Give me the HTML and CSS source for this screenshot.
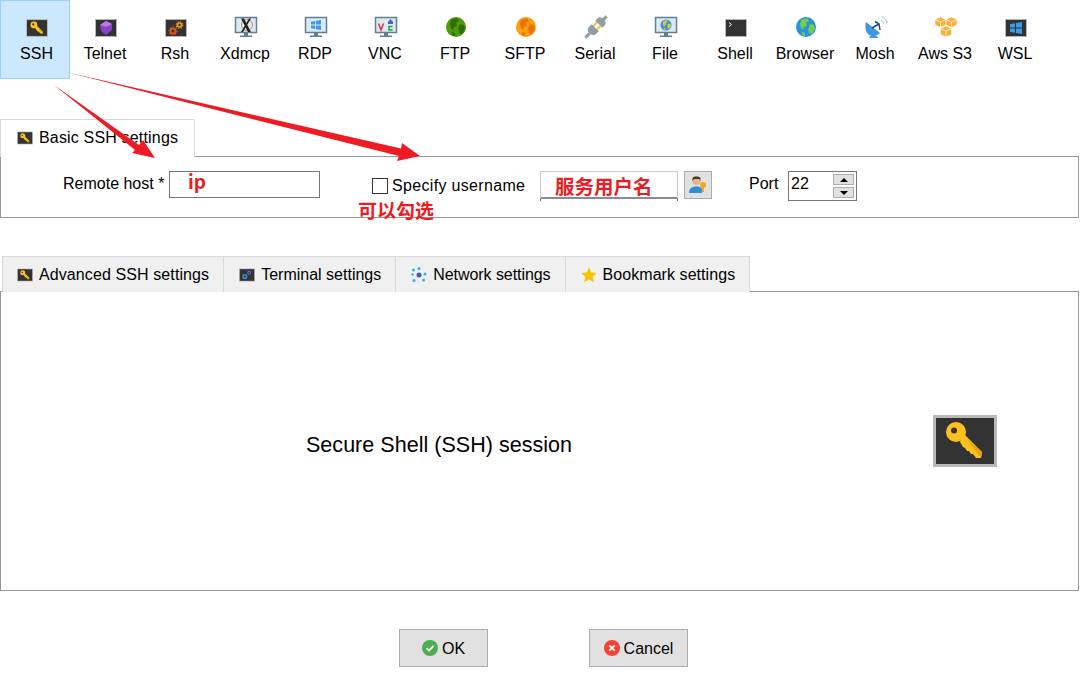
FILE: index.html
```html
<!DOCTYPE html>
<html lang="en">
<head>
    <meta charset="utf-8">
    <title>Session settings</title>
    <link rel="stylesheet" href="styles.css">
</head>
<body>
    <svg class="defs" width="0" height="0" aria-hidden="true">
        <defs>
            <symbol id="dark-box" viewBox="0 0 22 18">
                <rect x=".5" y=".5" width="21" height="17" fill="#333" stroke="#b5b5b5"/>
            </symbol>
            <symbol id="key-box" viewBox="0 0 64 52">
                <rect x="1.500" y="1.500" width="61" height="49" fill="#333" stroke="#b9b9b9" stroke-width="3"/>
                <circle cx="23" cy="17" r="10" fill="#fdc01f"/>
                <path d="M30 18 49 37 48 43 43 43 40 39 38 39 36 36 34 36 32 33 30 32 27 27z" fill="#fdc01f"/>
                <path d="M33 23 49 37 48 43z" fill="#e8a410"/>
                <circle cx="21" cy="15.500" r="3" fill="#333"/>
            </symbol>
            <symbol id="monitor" viewBox="0 0 24 24">
                <rect x="1.500" y="2.500" width="21" height="15" fill="#dbeaf2" stroke="#62808f" stroke-width="1.500"/>
                <rect x="10" y="18" width="4" height="3" fill="#62808f"/>
                <rect x="6" y="20.500" width="12" height="1.500" fill="#62808f"/>
            </symbol>
            <symbol id="win-logo" viewBox="0 0 12 12">
                <path d="M0 2 5 1.200V5.500H0zM6 1 12 0V5.500H6zM0 6.500H5V10.800L0 10zM6 6.500H12V12L6 11z" fill="#3d9ae8"/>
            </symbol>
            <symbol id="land" viewBox="0 0 20 20">
                <path d="M5 3 11 1l2 3-3 2 1 3-3 1-1 3-2-2-1-4zM14 7l4 1 1 4-3 5-3-1-1-4zM6 15l3 1 0 3-3-1z"/>
            </symbol>
        </defs>
    </svg>

    <nav class="toolbar">
        <a class="tool selected">
            <svg class="tool-icon" viewBox="0 0 24 24">
                <use href="#key-box" x="1" y="4" width="22" height="18"/>
            </svg>
            <span>SSH</span>
        </a>
        <a class="tool">
            <svg class="tool-icon" viewBox="0 0 24 24">
                <use href="#dark-box" x="1" y="4" width="22" height="18"/>
                <path d="M12 6 18 9 18 15 12 20 7 16 6 10z" fill="#8e3fc8"/>
                <path d="M6 10 12 12 18 9 12 6z" fill="#b77ee8"/>
            </svg>
            <span>Telnet</span>
        </a>
        <a class="tool">
            <svg class="tool-icon" viewBox="0 0 24 24">
                <use href="#dark-box" x="1" y="4" width="22" height="18"/>
                <circle cx="9" cy="16" r="2.500" fill="none" stroke="#d9541e" stroke-width="2"/>
                <circle cx="9" cy="16" r="4" fill="none" stroke="#d9541e" stroke-width="1.200" stroke-dasharray="1.500 1.500"/>
                <circle cx="15.500" cy="10" r="2" fill="none" stroke="#f29a1f" stroke-width="1.600"/>
                <circle cx="15.500" cy="10" r="3.300" fill="none" stroke="#f29a1f" stroke-width="1.100" stroke-dasharray="1.300 1.300"/>
            </svg>
            <span>Rsh</span>
        </a>
        <a class="tool">
            <svg class="tool-icon" viewBox="0 0 24 24">
                <use href="#monitor" width="24" height="24"/>
                <circle cx="13" cy="10" r="5.500" fill="none" stroke="#e08a66"/>
                <path d="M7 3.500h3l7 13.500h-3zM15 3.500h2L9 17H7z" fill="#222"/>
            </svg>
            <span>Xdmcp</span>
        </a>
        <a class="tool">
            <svg class="tool-icon" viewBox="0 0 24 24">
                <use href="#monitor" width="24" height="24"/>
                <use href="#win-logo" x="7" y="5" width="10" height="10"/>
            </svg>
            <span>RDP</span>
        </a>
        <a class="tool">
            <svg class="tool-icon" viewBox="0 0 24 24">
                <use href="#monitor" width="24" height="24"/>
                <path d="M4.500 8.500 7 15l2.500-6.500" fill="none" stroke="#e0303a" stroke-width="1.500"/>
                <path d="M18.500 11.500h-3.500v3.500h3.500" fill="none" stroke="#1fa03c" stroke-width="1.500"/>
                <path d="M14 7 16.500 4 19 7v2h-5z" fill="#4a5be0"/>
            </svg>
            <span>VNC</span>
        </a>
        <a class="tool">
            <svg class="tool-icon" viewBox="0 0 24 24">
                <circle cx="12" cy="12" r="10" fill="#4f9a08"/>
                <use href="#land" class="land-dark-green" x="2" y="2" width="20" height="20"/>
            </svg>
            <span>FTP</span>
        </a>
        <a class="tool">
            <svg class="tool-icon" viewBox="0 0 24 24">
                <circle cx="12" cy="12" r="10" fill="#ff9d0a"/>
                <use href="#land" class="land-orange" x="2" y="2" width="20" height="20"/>
            </svg>
            <span>SFTP</span>
        </a>
        <a class="tool">
            <svg class="tool-icon" viewBox="0 0 24 24">
                <g transform="rotate(45 12 12)" fill="#8f9ea8">
                    <rect x="10.500" y="-3" width="3" height="5"/>
                    <path d="M7 5Q7 1 12 1T17 5V8H7z"/>
                    <rect x="8.500" y="8" width="2" height="5" fill="#f4c430"/>
                    <rect x="13.500" y="8" width="2" height="5" fill="#f4c430"/>
                    <path d="M7 13H17V17Q17 21 12 21T7 17z"/>
                    <rect x="10.500" y="21" width="3" height="6"/>
                </g>
            </svg>
            <span>Serial</span>
        </a>
        <a class="tool">
            <svg class="tool-icon" viewBox="0 0 24 24">
                <use href="#monitor" width="24" height="24"/>
                <circle cx="12" cy="10" r="5.500" fill="#3f8fd8"/>
                <use href="#land" class="land-yellow" x="6.500" y="4.500" width="11" height="11"/>
            </svg>
            <span>File</span>
        </a>
        <a class="tool">
            <svg class="tool-icon" viewBox="0 0 24 24">
                <use href="#dark-box" x="1" y="4" width="22" height="18"/>
                <path d="M5 7.500 7.500 9.500 5 11.500" fill="none" stroke="#eee"/>
            </svg>
            <span>Shell</span>
        </a>
        <a class="tool">
            <svg class="tool-icon" viewBox="0 0 24 24">
                <circle cx="12" cy="12" r="10" fill="#2f8fe0"/>
                <use href="#land" class="land-green" x="2" y="2" width="20" height="20"/>
            </svg>
            <span>Browser</span>
        </a>
        <a class="tool">
            <svg class="tool-icon" viewBox="0 0 24 24">
                <path d="M2 7 16 18C12 22 7 22 4 19 1 16 1 11 2 7z" fill="#3f97dd"/>
                <path d="M6 21h7l1 2H5z" fill="#3f97dd"/>
                <path d="M8 13 15 9M11 6.500l4 2.500 1 6" fill="none" stroke="#1c4f86" stroke-width="1.500"/>
                <path d="M17 5a4 4 0 0 1 2.500 3.500M17.500 1.500a8 8 0 0 1 5.500 7" fill="none" stroke="#8cc6ef"/>
            </svg>
            <span>Mosh</span>
        </a>
        <a class="tool">
            <svg class="tool-icon" viewBox="0 0 24 24">
                <path d="M6.500 2 12 4.500V10L6.500 12.500 1 10V4.500zM17.500 2 23 4.500V10L17.500 12.500 12 10V4.500zM12 11 17.500 13.500V19.500L12 22 6.500 19.500V13.500z" fill="#fbb03b" stroke="#fff" stroke-width=".5"/>
                <path d="M1 4.500 6.500 7 12 4.500 17.500 7 23 4.500M6.500 7V12.500M17.500 7V12.500M6.500 13.500 12 16 17.500 13.500M12 16V22" fill="none" stroke="#fff" stroke-width=".7"/>
            </svg>
            <span>Aws S3</span>
        </a>
        <a class="tool">
            <svg class="tool-icon" viewBox="0 0 24 24">
                <use href="#dark-box" x="1" y="4" width="22" height="18"/>
                <use href="#win-logo" x="6" y="7" width="12" height="12"/>
            </svg>
            <span>WSL</span>
        </a>
    </nav>

    <section class="basic">
        <div class="tabs">
            <div class="tab active">
                <svg class="tab-icon" viewBox="0 0 64 52"><use href="#key-box" width="64" height="52"/></svg>
                Basic SSH settings
            </div>
        </div>
        <form class="panel basic-form">
            <label class="host-label" for="host">Remote host *</label>
            <input class="host-input" id="host">
            <input class="check" id="specify" type="checkbox">
            <label class="user-label" for="specify">Specify username</label>
            <div class="user-field"><input class="user-input"></div>
            <button class="user-btn" type="button">
                <svg viewBox="0 0 20 20" width="20" height="20">
                    <circle cx="8.500" cy="6" r="4" fill="#e8b48c"/>
                    <path d="M4.500 6C4 2 6 1.500 8.500 1.500S13 2 12.500 5.500L11 4H6z" fill="#4a3526"/>
                    <path d="M1 18C1 13 4 11.500 8.500 11.500 11 11.500 13 12 14 14V18z" fill="#2f8fd8"/>
                    <circle cx="15" cy="10" r="3" fill="#f2a81d"/>
                    <path d="M14 11h2v6h-2z" fill="#f2a81d"/>
                </svg>
            </button>
            <label class="port-label" for="port">Port</label>
            <div class="port-field">
                <input class="port-input" id="port" value="22">
                <div class="spin">
                    <span class="spin-btn"><i class="arrow-up"></i></span>
                    <span class="spin-btn"><i class="arrow-down"></i></span>
                </div>
            </div>
        </form>
    </section>

    <section class="advanced">
        <div class="tabs">
            <div class="tab tab-advanced">
                <svg class="tab-icon" viewBox="0 0 64 52"><use href="#key-box" width="64" height="52"/></svg>
                Advanced SSH settings
            </div>
            <div class="tab">
                <svg class="tab-icon" viewBox="0 0 22 18">
                    <use href="#dark-box" width="22" height="18"/>
                    <circle cx="8" cy="11" r="2.500" fill="none" stroke="#3f8fd8" stroke-width="2"/>
                    <circle cx="14" cy="6" r="2" fill="none" stroke="#5d6fd8" stroke-width="1.500"/>
                </svg>
                Terminal settings
            </div>
            <div class="tab tab-network">
                <svg class="tab-icon square" viewBox="0 0 16 16">
                    <circle cx="8" cy="8" r="2.500" fill="#4a55c0"/>
                    <circle cx="2.500" cy="3" r="1.500" fill="#27b7d8"/>
                    <circle cx="8" cy="1.500" r="1.500" fill="#27b7d8"/>
                    <circle cx="14" cy="7" r="1.500" fill="#27b7d8"/>
                    <circle cx="12.500" cy="13" r="1.500" fill="#27b7d8"/>
                    <circle cx="3" cy="13.500" r="1.500" fill="#27b7d8"/>
                    <circle cx="1.500" cy="7.500" r="1.200" fill="#27b7d8"/>
                </svg>
                Network settings
            </div>
            <div class="tab tab-bookmark">
                <svg class="tab-icon square" viewBox="0 0 16 16">
                    <path d="M8 .5 10.300 5.500 15.800 6.100 11.700 9.800 12.900 15.300 8 12.500 3.100 15.300 4.300 9.800 .2 6.100 5.700 5.500z" fill="#f5c400"/>
                </svg>
                Bookmark settings
            </div>
        </div>
        <div class="panel description">
            <p>Secure Shell (SSH) session</p>
            <svg class="big-key" viewBox="0 0 64 52"><use href="#key-box" width="64" height="52"/></svg>
        </div>
    </section>

    <footer class="actions">
        <button class="action" type="button">
            <svg viewBox="0 0 16 16" width="16" height="16">
                <circle cx="8" cy="8" r="8" fill="#4caf50"/>
                <path d="M4.500 8.200 7 10.500 11.500 6" fill="none" stroke="#fff" stroke-width="1.800"/>
            </svg>
            OK
        </button>
        <button class="action cancel" type="button">
            <svg viewBox="0 0 16 16" width="16" height="16">
                <circle cx="8" cy="8" r="8" fill="#f44336"/>
                <path d="M5.300 5.300 10.700 10.700M10.700 5.300 5.300 10.700" fill="none" stroke="#fff" stroke-width="1.800"/>
            </svg>
            Cancel
        </button>
    </footer>

    <!-- red notes drawn on top of the screenshot -->
    <svg class="arrows" viewBox="0 0 1080 681" width="1080" height="681" aria-hidden="true">
        <path d="M54 85 139 145 143 140 155 158 132 153 135 150z" fill="#ed1c24"/>
        <path d="M66 72 401 148.500 402 143 420 156 397 161 399 156z" fill="#ed1c24"/>
    </svg>
    <span class="note note-ip">ip</span>
    <span class="note note-user">服务用户名</span>
    <span class="note note-check">可以勾选</span>
</body>
</html>
```

FILE: styles.css
```css
html {
    color: #000;
    font-family: "Liberation Sans", Arial, sans-serif;
    font-size: 16px;
}

body {
    position: relative;
    width: 1080px;
    height: 681px;
    margin: 0;
    overflow: hidden;
    background: #fff;
}

input,
button {
    font-family: inherit;
    font-size: inherit;
    margin: 0;
}

.defs {
    position: absolute;
}

/* --- Top toolbar --- */
.toolbar {
    display: flex;
    height: 79px;
}

.tool {
    box-sizing: border-box;
    display: flex;
    flex-direction: column;
    align-items: center;
    width: 70px;
    height: 79px;
    padding-top: 15px;
    line-height: 20px;
}

.tool span {
    margin-top: 5px;
    margin-right: 2px;
}

.tool.selected {
    margin-right: 1px;
    padding-left: 3px;
    padding-top: 14px;
    background: #cce8ff;
    border: 1px solid #99d1ff;
}

.tool.selected span {
    margin-right: 0;
}

.tool-icon {
    display: block;
    width: 24px;
    height: 24px;
}

.land-dark-green { fill: #2f6d06; }
.land-orange { fill: #e8720c; }
.land-yellow { fill: #d8c93a; }
.land-green { fill: #6fd04a; }

/* --- Tabs and panels --- */
.tabs {
    display: flex;
    position: relative;
    z-index: 1;
}

.tab {
    box-sizing: border-box;
    display: flex;
    align-items: center;
    gap: 6px;
    height: 36px;
    padding: 0 14px 0 15px;
    background: #f0f0f0;
    border: 1px solid #d9d9d9;
    border-left-width: 0;
    border-bottom: 0;
}

.tab.tab-advanced {
    padding-left: 14px;
    border-left-width: 1px;
    letter-spacing: .1px;
}

.tab.tab-network {
    letter-spacing: -.06px;
}

.tab.tab-bookmark {
    letter-spacing: .06px;
}

.tab.active {
    height: 38px;
    padding: 0 16px 2px 16px;
    background: #fff;
    border-left-width: 1px;
    letter-spacing: .17px;
}

.tab-icon {
    width: 16px;
    height: 14px;
}

.tab-icon.square {
    height: 16px;
}

.panel {
    box-sizing: border-box;
    width: 1079px;
    border: 1px solid #999;
}

.basic {
    margin-top: 40px;
}

.basic .tabs {
    margin-bottom: -1px;
}

.basic-form {
    display: flex;
    align-items: flex-start;
    height: 62px;
    padding: 14px 0 0 62px;
}

.host-label {
    width: 106px;
    line-height: 25px;
}

.host-input {
    box-sizing: border-box;
    width: 151px;
    height: 27px;
    padding: 0;
    border: 1px solid #767676;
}

.check {
    appearance: none;
    box-sizing: border-box;
    width: 16px;
    height: 16px;
    margin: 7px 4px 0 52px;
    background: #fff;
    border: 1px solid #333;
    border-radius: 0;
}

.user-label {
    width: 148px;
    line-height: 29px;
    letter-spacing: .33px;
}

.user-field {
    box-sizing: border-box;
    width: 138px;
    height: 30px;
    border-right: 1px solid #777;
    border-left: 1px solid #777;
}

.user-input {
    box-sizing: border-box;
    display: block;
    width: 138px;
    height: 28px;
    margin-left: -1px;
    padding: 0;
    border: 1px solid #ccc;
    border-bottom: 2px solid #8b8b96;
}

.user-btn {
    box-sizing: border-box;
    display: flex;
    align-items: center;
    justify-content: center;
    width: 28px;
    height: 28px;
    margin-left: 6px;
    padding: 0;
    background: #e1e1e1;
    border: 1px solid #adadad;
}

.port-label {
    width: 39px;
    margin-left: 37px;
    line-height: 26px;
}

.port-field {
    box-sizing: border-box;
    display: flex;
    width: 69px;
    height: 30px;
    border: 1px solid #767676;
}

.port-input {
    width: 42px;
    height: 24px;
    padding: 0 0 0 2px;
    border: 0;
    outline: 0;
}

.spin {
    display: flex;
    flex-direction: column;
    gap: 2px;
    margin-top: 2px;
}

.spin-btn {
    box-sizing: border-box;
    display: flex;
    align-items: center;
    justify-content: center;
    width: 21px;
    height: 11px;
    background: #e1e1e1;
    border: 1px solid #adadad;
}

.arrow-up {
    border: 4px solid transparent;
    border-top: 0;
    border-bottom: 4px solid #000;
}

.arrow-down {
    border: 4px solid transparent;
    border-bottom: 0;
    border-top: 4px solid #000;
}

.advanced {
    margin-top: 38px;
}

.advanced .tabs {
    margin-left: 2px;
}

.description {
    display: flex;
    align-items: center;
    justify-content: space-between;
    height: 300px;
    margin-top: -1px;
    padding: 0 81px 0 305px;
}

.description p {
    margin: 8px 0 0;
    font-size: 21.500px;
    letter-spacing: .03px;
}

.big-key {
    width: 64px;
    height: 52px;
}

/* --- OK / Cancel --- */
.actions {
    display: flex;
    gap: 101px;
    margin-top: 38px;
    padding-left: 399px;
}

.action {
    box-sizing: border-box;
    display: flex;
    align-items: center;
    justify-content: center;
    gap: 4px;
    width: 89px;
    height: 38px;
    padding: 2px 0 0;
    background: #e1e1e1;
    border: 1px solid #adadad;
}

.action svg {
    margin-top: -2px;
}

.action.cancel {
    width: 99px;
}

/* --- Red annotations --- */
.arrows {
    position: absolute;
    top: 0;
    left: 0;
    z-index: 2;
    pointer-events: none;
}

.note {
    position: absolute;
    z-index: 3;
    color: #ed1c24;
    font-family: "Noto Sans CJK SC", "Noto Sans", sans-serif;
    font-size: 19px;
    font-weight: 700;
    line-height: 24px;
}

.note-ip {
    top: 169px;
    left: 188px;
}

.note-user {
    top: 174px;
    left: 555px;
    font-size: 19.500px;
}

.note-check {
    top: 198px;
    left: 358px;
}
```
